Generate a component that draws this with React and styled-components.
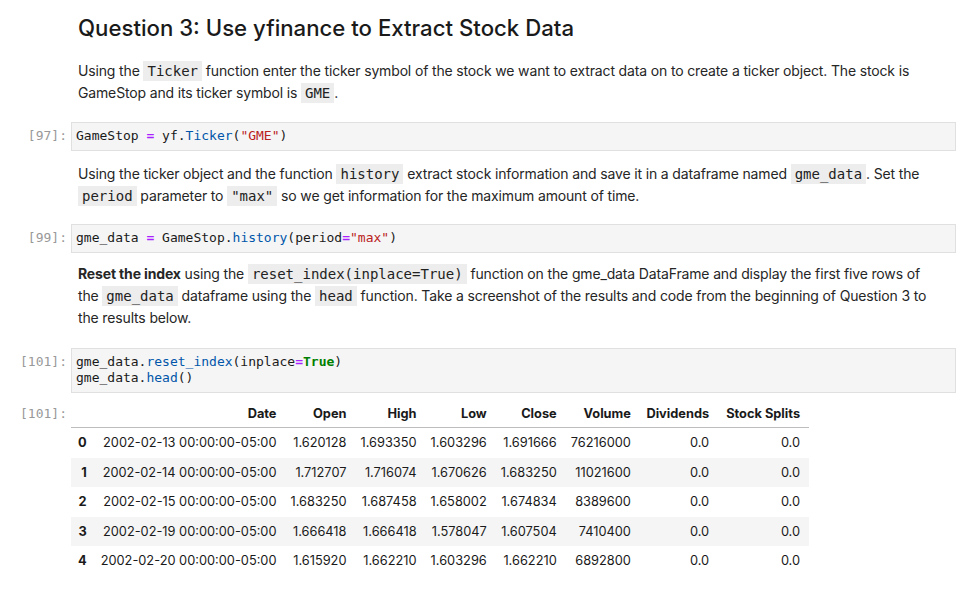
import React from "react"
import styled, { createGlobalStyle } from "styled-components"

const GlobalStyle = createGlobalStyle`
  body {
    margin: 0;
    background: #fff;
    font-family: Inter, "Noto Sans", sans-serif;
    color: #1f1f1f;
  }
`

const Notebook = styled.div`
  width: 968px;
  padding-right: 12px;
  box-sizing: border-box;
`

const Cell = styled.div`
  display: grid;
  grid-template-columns: 71px 1fr;
`

const Prompt = styled.div`
  font-family: "DejaVu Sans Mono", monospace;
  font-size: 13px;
  line-height: 16px;
  color: #999;
  text-align: right;
  padding: ${(p) => p.$pad || "6px"} 4px 0 0;
`

const Markdown = styled.div`
  grid-column: 2;
  padding: ${(p) => p.$top || "11px"} 20px ${(p) => p.$bottom || "18px"} 7px;
`

const Heading = styled.h2`
  margin: 0 0 19px;
  font-size: 22.2px;
  line-height: 26px;
  font-weight: 500;
  color: #1a1a1a;
`

const Para = styled.p`
  margin: 0;
  font-size: 14px;
  line-height: 22px;
  letter-spacing: -0.15px;
  color: #262626;
`

// bg is widened with box-shadow so the padding doesn't push into the words around it
const Code = styled.code`
  font-family: "DejaVu Sans Mono", monospace;
  font-size: 14px;
  line-height: 1;
  letter-spacing: 0;
  background: #ededed;
  margin: 0 4px;
  padding: 2px 0;
  box-shadow: -4px 0 0 #ededed, 4px 0 0 #ededed;
  color: #222;
`

const Input = styled.pre`
  margin: 0;
  background: #f5f5f5;
  border: 1px solid #e0e0e0;
  padding: 5px 4px 6px;
  font-family: "DejaVu Sans Mono", monospace;
  font-size: 13px;
  line-height: 16px;
  color: #1a1a1a;
`

const Op = styled.span`
  color: #aa22ff;
  font-weight: bold;
`
const Fn = styled.span`
  color: #0055aa;
`
const Str = styled.span`
  color: #ba2121;
`
const Kw = styled.span`
  color: #008000;
  font-weight: bold;
`

const Output = styled.div`
  padding-top: 6px;
`

const Table = styled.table`
  border-collapse: collapse;
  font-size: 12.8px;
  color: #1a1a1a;
`

const Th = styled.th`
  text-align: right;
  font-weight: 700;
  padding: 0 ${(p) => (p.$wide ? "8.5px" : "7px")};
  height: ${(p) => (p.$head ? "28px" : "29.5px")};
  border-bottom: ${(p) => (p.$head ? "1px solid #bdbdbd" : "none")};
`

const Td = styled.td`
  text-align: right;
  padding: 0 ${(p) => (p.$wide ? "8.5px" : "7px")};
  height: 29.5px;
`

const Row = styled.tr`
  background: ${(p) => (p.$odd ? "#f5f5f5" : "transparent")};
`

const cols = ["Date", "Open", "High", "Low", "Close", "Volume", "Dividends", "Stock Splits"]

const rows = [
  ["2002-02-13 00:00:00-05:00", "1.620128", "1.693350", "1.603296", "1.691666", "76216000", "0.0", "0.0"],
  ["2002-02-14 00:00:00-05:00", "1.712707", "1.716074", "1.670626", "1.683250", "11021600", "0.0", "0.0"],
  ["2002-02-15 00:00:00-05:00", "1.683250", "1.687458", "1.658002", "1.674834", "8389600", "0.0", "0.0"],
  ["2002-02-19 00:00:00-05:00", "1.666418", "1.666418", "1.578047", "1.607504", "7410400", "0.0", "0.0"],
  ["2002-02-20 00:00:00-05:00", "1.615920", "1.662210", "1.603296", "1.662210", "6892800", "0.0", "0.0"],
]

export default function App() {
  return (
    <Notebook>
      <GlobalStyle />
      <Cell>
        <Markdown $top="15px">
          <Heading>Question 3: Use yfinance to Extract Stock Data</Heading>
          <Para>
            Using the <Code>Ticker</Code> function enter the ticker symbol of the stock we want to extract data on to
            create a ticker object. The stock is GameStop and its ticker symbol is <Code>GME</Code>.
          </Para>
        </Markdown>
      </Cell>

      <Cell>
        <Prompt>[97]:</Prompt>
        <Input>
          GameStop <Op>=</Op> yf<span>.</span>
          <Fn>Ticker</Fn>(<Str>"GME"</Str>)
        </Input>
      </Cell>

      <Cell>
        <Markdown $top="12px" $bottom="17px">
          <Para>
            Using the ticker object and the function <Code>history</Code> extract stock information and save it in a
            dataframe named <Code>gme_data</Code>. Set the <Code>period</Code> parameter to <Code>"max"</Code> so we get
            information for the maximum amount of time.
          </Para>
        </Markdown>
      </Cell>

      <Cell>
        <Prompt>[99]:</Prompt>
        <Input>
          gme_data <Op>=</Op> GameStop.<Fn>history</Fn>(period<Op>=</Op>
          <Str>"max"</Str>)
        </Input>
      </Cell>

      <Cell>
        <Markdown $top="10px" $bottom="19px">
          <Para>
            <b>Reset the index</b> using the <Code>reset_index(inplace=True)</Code> function on the gme_data DataFrame and
            display the first five rows of the <Code>gme_data</Code> dataframe using the <Code>head</Code> function. Take
            a screenshot of the results and code from the beginning of Question 3 to the results below.
          </Para>
        </Markdown>
      </Cell>

      <Cell>
        <Prompt>[101]:</Prompt>
        <Input>
          gme_data.<Fn>reset_index</Fn>(inplace<Op>=</Op>
          <Kw>True</Kw>)
          {"\n"}gme_data.<Fn>head</Fn>()
        </Input>
      </Cell>

      <Cell>
        <Prompt $pad="13px">[101]:</Prompt>
        <Output>
          <Table>
            <thead>
              <tr>
                <Th $head />
                {cols.map((c, j) => (
                  <Th $head $wide={j > 5} key={c}>
                    {c}
                  </Th>
                ))}
              </tr>
            </thead>
            <tbody>
              {rows.map((r, i) => (
                <Row key={i} $odd={i % 2 === 1}>
                  <Th>{i}</Th>
                  {r.map((v, j) => (
                    <Td $wide={j > 5} key={j}>
                      {v}
                    </Td>
                  ))}
                </Row>
              ))}
            </tbody>
          </Table>
        </Output>
      </Cell>
    </Notebook>
  )
}
